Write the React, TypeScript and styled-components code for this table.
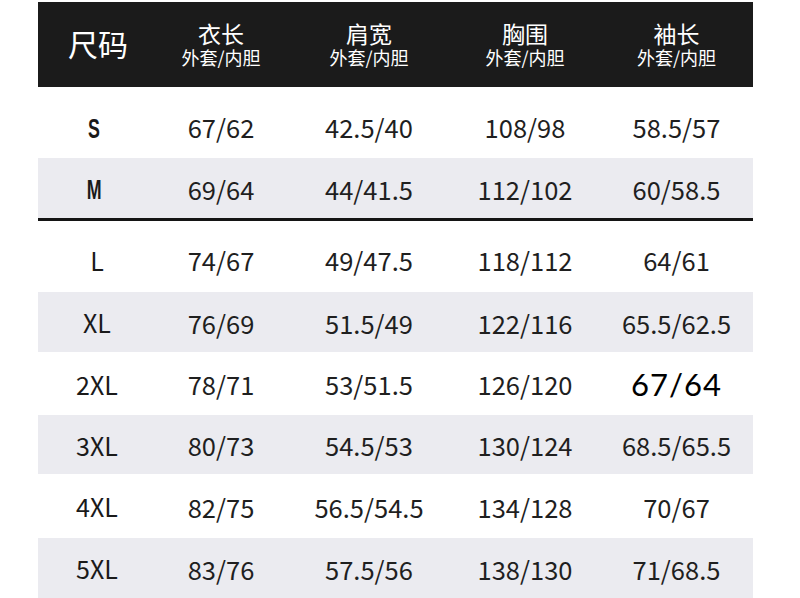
import { FC } from "react";
import styled, { createGlobalStyle } from "styled-components";

const GlobalStyle = createGlobalStyle`
  html, body {
    margin: 0;
    padding: 0;
    background: #ffffff;
  }
  body {
    font-family: "Noto Sans CJK SC", "Noto Sans", sans-serif;
    color: #1c1c1c;
  }
`;

const COLS = "116px 134px 162px 150px 153px";

type Cell = string | { text: string; special: boolean };

interface SizeRow {
  size: string;
  label: "bold" | "normal";
  values: Cell[];
  shade: boolean;
  height: number;
  shift: number;
}

const columns = ["衣长", "肩宽", "胸围", "袖长"];

const rows: SizeRow[] = [
  { size: "S", label: "bold", values: ["67/62", "42.5/40", "108/98", "58.5/57"], shade: false, height: 71, shift: 8 },
  { size: "M", label: "bold", values: ["69/64", "44/41.5", "112/102", "60/58.5"], shade: true, height: 60, shift: 0 },
  { size: "L", label: "normal", values: ["74/67", "49/47.5", "118/112", "64/61"], shade: false, height: 71, shift: 6 },
  { size: "XL", label: "normal", values: ["76/69", "51.5/49", "122/116", "65.5/62.5"], shade: true, height: 60, shift: 0 },
  {
    size: "2XL",
    label: "normal",
    values: ["78/71", "53/51.5", "126/120", { text: "67/64", special: true }],
    shade: false,
    height: 63,
    shift: 0,
  },
  { size: "3XL", label: "normal", values: ["80/73", "54.5/53", "130/124", "68.5/65.5"], shade: true, height: 59, shift: 0 },
  { size: "4XL", label: "normal", values: ["82/75", "56.5/54.5", "134/128", "70/67"], shade: false, height: 64, shift: 0 },
  { size: "5XL", label: "normal", values: ["83/76", "57.5/56", "138/130", "71/68.5"], shade: true, height: 60, shift: 0 },
];

const App: FC = () => {
  return (
    <Page>
      <GlobalStyle />
      <Table>
        <Header>
          <SizeTitle>尺码</SizeTitle>
          {columns.map((c) => (
            <HeadCell key={c}>
              <HeadMain>{c}</HeadMain>
              <HeadSub>外套/内胆</HeadSub>
            </HeadCell>
          ))}
        </Header>
        {rows.map((r, i) => (
          <div key={r.size}>
            <Row $shade={r.shade} $height={r.height} $shift={r.shift}>
              {r.label === "bold" ? (
                <SizeCell>
                  <Narrow>{r.size}</Narrow>
                </SizeCell>
              ) : (
                <SizeCell>{r.size}</SizeCell>
              )}
              {r.values.map((v, j) =>
                typeof v === "string" ? (
                  <Value key={j}>{v}</Value>
                ) : (
                  <SpecialValue key={j}>{v.text}</SpecialValue>
                )
              )}
            </Row>
            {i === 1 && <Divider />}
          </div>
        ))}
      </Table>
    </Page>
  );
};

export default App;

const Page = styled.div`
  width: 800px;
  height: 598px;
  overflow: hidden;
  background: #ffffff;
  padding: 2px 0 0 38px;
  box-sizing: border-box;
`;

const Table = styled.div`
  width: 715px;
  display: flex;
  flex-direction: column;
`;

const Header = styled.div`
  display: grid;
  grid-template-columns: ${COLS};
  height: 85px;
  background-color: #1b1b1b;
  color: #ffffff;
  align-items: center;
`;

const SizeTitle = styled.div`
  font-size: 30px;
  line-height: 36px;
  text-align: center;
  padding-left: 4px;
  padding-bottom: 4px;
`;

const HeadCell = styled.div`
  display: flex;
  flex-direction: column;
  align-items: center;
  padding-bottom: 2px;
`;

const HeadMain = styled.div`
  font-size: 23px;
  line-height: 26px;
`;

const HeadSub = styled.div`
  font-size: 18px;
  line-height: 22px;
`;

const Row = styled.div<{ $shade: boolean; $height: number; $shift: number }>`
  display: grid;
  grid-template-columns: ${COLS};
  align-items: center;
  height: ${(p) => p.$height}px;
  padding-top: ${(p) => p.$shift}px;
  box-sizing: border-box;
  background-color: ${(p) => (p.$shade ? "#ebebf0" : "#ffffff")};
`;

const Divider = styled.div`
  height: 3px;
  background-color: #141414;
`;

const SizeCell = styled.div`
  text-align: center;
  padding-left: 2px;
  font-size: 25px;
  color: #1a1a1a;
`;

const Narrow = styled.span`
  display: inline-block;
  font-family: "Liberation Sans", Arial, sans-serif;
  font-weight: 700;
  font-size: 27px;
  transform: scaleX(0.66);
  margin-left: -6px;
`;

const Value = styled.div`
  text-align: center;
  font-size: 25.5px;
  color: #1f1f1f;
`;

const SpecialValue = styled.div`
  text-align: center;
  font-family: "Lato", "Open Sans", sans-serif;
  font-size: 31px;
  letter-spacing: 1px;
  color: #000000;
`;
